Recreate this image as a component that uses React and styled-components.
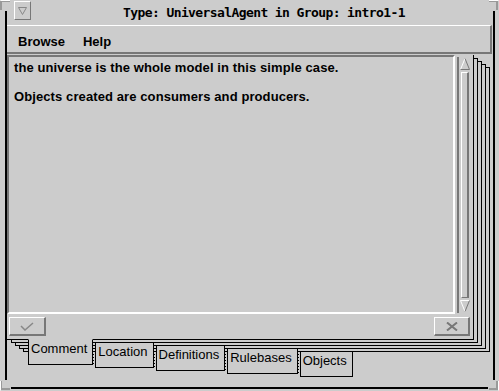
import styled, { createGlobalStyle } from 'styled-components';

const GlobalStyle = createGlobalStyle`
  html, body {
    margin: 0;
    padding: 0;
    background: #cccccc;
  }
  body {
    font-family: "Liberation Sans", Arial, sans-serif;
  }
`;

const Window = styled.div`
  position: relative;
  width: 499px;
  height: 391px;
  box-sizing: border-box;
  padding: 0 4px 2px 5px;
  background: #cccccc;
  overflow: hidden;
`;

const Frame = styled.div`
  height: 100%;
  box-sizing: border-box;
  border-left: 2px solid #000;
  border-right: 2px solid #000;
  border-bottom: 2px solid #000;
  display: flex;
  flex-direction: column;
`;

const Corner = styled.svg`
  position: absolute;
  width: 11px;
  height: 11px;
  background: #cccccc;
  ${(p) => (p.$top ? 'top: 0;' : 'bottom: 0;')}
  ${(p) => (p.$left ? 'left: 0;' : 'right: 0;')}
`;

const TitleBar = styled.div`
  display: flex;
  align-items: center;
  height: 25px;
`;

const MenuButton = styled.div`
  width: 17px;
  height: 19px;
  margin: 0 0 4px 7px;
  box-sizing: border-box;
  border-top: 1px solid #fff;
  border-left: 1px solid #fff;
  border-right: 1px solid #777;
  border-bottom: 1px solid #777;
  display: flex;
  align-items: center;
  justify-content: center;
`;

const Title = styled.div`
  flex: 1;
  padding-left: 4px;
  text-align: center;
  font-family: "DejaVu Sans Mono", monospace;
  font-weight: bold;
  font-size: 13px;
  letter-spacing: -0.6px;
  line-height: 25px;
  color: #000;
`;

const MenuBar = styled.div`
  display: flex;
  gap: 18px;
  height: 29px;
  margin-right: 1px;
  box-sizing: border-box;
  padding-left: 11px;
  border-top: 1px solid #fff;
  border-right: 2px solid #777;
  border-bottom: 2px solid #777;
`;

const MenuItem = styled.span`
  padding-top: 6px;
  font-weight: bold;
  font-size: 13px;
  line-height: 20px;
  color: #000;
`;

const Notebook = styled.div`
  margin-top: 1px;
  display: flex;
  flex-direction: column;
`;

const Page = styled.div`
  width: 467px;
  height: 285px;
  box-sizing: border-box;
  border-right: 1px solid #000;
  border-bottom: 1px solid #000;
  background: #cccccc;
  display: flex;
  flex-direction: column;
  box-shadow:
    4px 3px 0 -1px #cccccc, 4px 3px 0 0 #000,
    8px 6px 0 -1px #cccccc, 8px 6px 0 0 #000,
    12px 9px 0 -1px #cccccc, 12px 9px 0 0 #000,
    16px 12px 0 -1px #cccccc, 16px 12px 0 0 #000;
`;

const TextRow = styled.div`
  display: flex;
  height: 259px;
`;

const TextArea = styled.div`
  width: 448px;
  box-sizing: border-box;
  border-top: 2px solid #777;
  border-left: 2px solid #777;
  border-right: 2px solid #fff;
  border-bottom: 2px solid #fff;
  padding: 4px 5px;
  font-weight: bold;
  font-size: 13px;
  letter-spacing: 0.1px;
  line-height: 13.5px;
  color: #000;
`;

const Paragraph = styled.p`
  margin: 0 0 15px;
`;

const Scrollbar = styled.div`
  width: 14px;
  height: 256px;
  margin: 2px 0 0 2px;
  box-sizing: border-box;
  border-left: 2px solid #777;
  display: flex;
  flex-direction: column;
  align-items: center;
`;

const Arrow = styled.svg`
  width: 10px;
  height: 12px;
  flex: none;
  margin: ${(p) => (p.$down ? '2px 0 1px' : '1px 0 2px')};
`;

const Slider = styled.div`
  flex: 1;
  width: 8px;
  box-sizing: border-box;
  border-left: 1px solid #fff;
  border-top: 1px solid #fff;
  border-right: 2px solid #777;
  border-bottom: 1px solid #777;
`;

const ButtonRow = styled.div`
  display: flex;
  justify-content: space-between;
  padding: 3px 3px 0 2px;
`;

const ToolButton = styled.div`
  width: ${(p) => p.$width}px;
  height: 19px;
  box-sizing: border-box;
  border-top: 1px solid #fff;
  border-left: 1px solid #fff;
  border-right: 2px solid #777;
  border-bottom: 2px solid #777;
  display: flex;
  align-items: center;
  justify-content: center;
`;

const TabRow = styled.div`
  display: flex;
  align-items: flex-start;
  gap: 2px;
  margin-top: -1px;
  padding-left: 21px;
`;

const Tab = styled.div`
  position: relative;
  z-index: 1;
  height: 26px;
  margin-top: ${(p) => p.$index * 3}px;
  box-sizing: border-box;
  padding: 1px 5px 0 2px;
  border: 1px solid #000;
  border-top-color: ${(p) => (p.$index === 0 ? '#cccccc' : '#000')};
  background: #cccccc;
  font-size: 13px;
  line-height: 15px;
  color: #000;
  white-space: nowrap;

  &::before {
    content: ${(p) => (p.$index === 0 ? 'none' : "''")};
    position: absolute;
    left: -4px;
    top: 2px;
    width: 2px;
    height: 21px;
    background: repeating-linear-gradient(to bottom, #000 0 1px, transparent 1px 3px);
  }
`;

const CornerMark = ({ top, left }) => {
  const h = top ? 1 : 9;
  const v = left ? 1 : 9;
  return (
    <Corner $top={top} $left={left} viewBox="0 0 11 11">
      <path
        d={`M${left ? 1 : 10} ${h} H${left ? 10 : 1} M${v} ${top ? 1 : 10} V${top ? 10 : 1}`}
        stroke="#999"
        strokeWidth="2"
        fill="none"
      />
      <path
        d={`M${left ? 0.5 : 10.5} ${top ? 0.5 : 10.5} ${top ? `H${left ? 10 : 1}` : `V1`}`}
        stroke="#fff"
        strokeWidth="1"
        fill="none"
      />
    </Corner>
  );
};

const tabs = ['Comment', 'Location', 'Definitions', 'Rulebases', 'Objects'];

export default function App() {
  return (
    <>
      <GlobalStyle />
      <Window>
        <Frame>
          <TitleBar>
            <MenuButton>
              <svg width="9" height="8" viewBox="0 0 9 8">
                <path d="M0.5 0.5 H8.5 L4.5 7.5 Z" fill="#cccccc" stroke="#888" strokeWidth="1" />
              </svg>
            </MenuButton>
            <Title>Type: UniversalAgent in Group: intro1-1</Title>
          </TitleBar>
          <MenuBar>
            <MenuItem>Browse</MenuItem>
            <MenuItem>Help</MenuItem>
          </MenuBar>
          <Notebook>
            <Page>
              <TextRow>
                <TextArea>
                  <Paragraph>the universe is the whole model in this simple case.</Paragraph>
                  <Paragraph>Objects created are consumers and producers.</Paragraph>
                </TextArea>
                <Scrollbar>
                  <Arrow viewBox="0 0 10 12">
                    <path d="M5 0.5 L0.5 11.5" stroke="#fff" strokeWidth="1" />
                    <path d="M5 0.5 L9.5 11.5 M0.5 11.5 H9.5" stroke="#777" strokeWidth="1" />
                  </Arrow>
                  <Slider />
                  <Arrow $down viewBox="0 0 10 12">
                    <path d="M0.5 0.5 H9.5 M0.5 0.5 L5 11.5" stroke="#fff" strokeWidth="1" />
                    <path d="M9.5 0.5 L5 11.5" stroke="#777" strokeWidth="1" />
                  </Arrow>
                </Scrollbar>
              </TextRow>
              <ButtonRow>
                <ToolButton $width={37}>
                  <svg width="14" height="9" viewBox="0 0 14 9">
                    <path d="M1 4 L5 8 L13 1" stroke="#888" strokeWidth="1.5" fill="none" />
                  </svg>
                </ToolButton>
                <ToolButton $width={36}>
                  <svg width="12" height="9" viewBox="0 0 12 9">
                    <path d="M1 0.5 L11 8.5 M11 0.5 L1 8.5" stroke="#777" strokeWidth="2" fill="none" />
                  </svg>
                </ToolButton>
              </ButtonRow>
            </Page>
            <TabRow>
              {tabs.map((label, i) => (
                <Tab key={label} $index={i}>
                  {label}
                </Tab>
              ))}
            </TabRow>
          </Notebook>
        </Frame>
        <CornerMark top left />
        <CornerMark top />
        <CornerMark left />
        <CornerMark />
      </Window>
    </>
  );
}
